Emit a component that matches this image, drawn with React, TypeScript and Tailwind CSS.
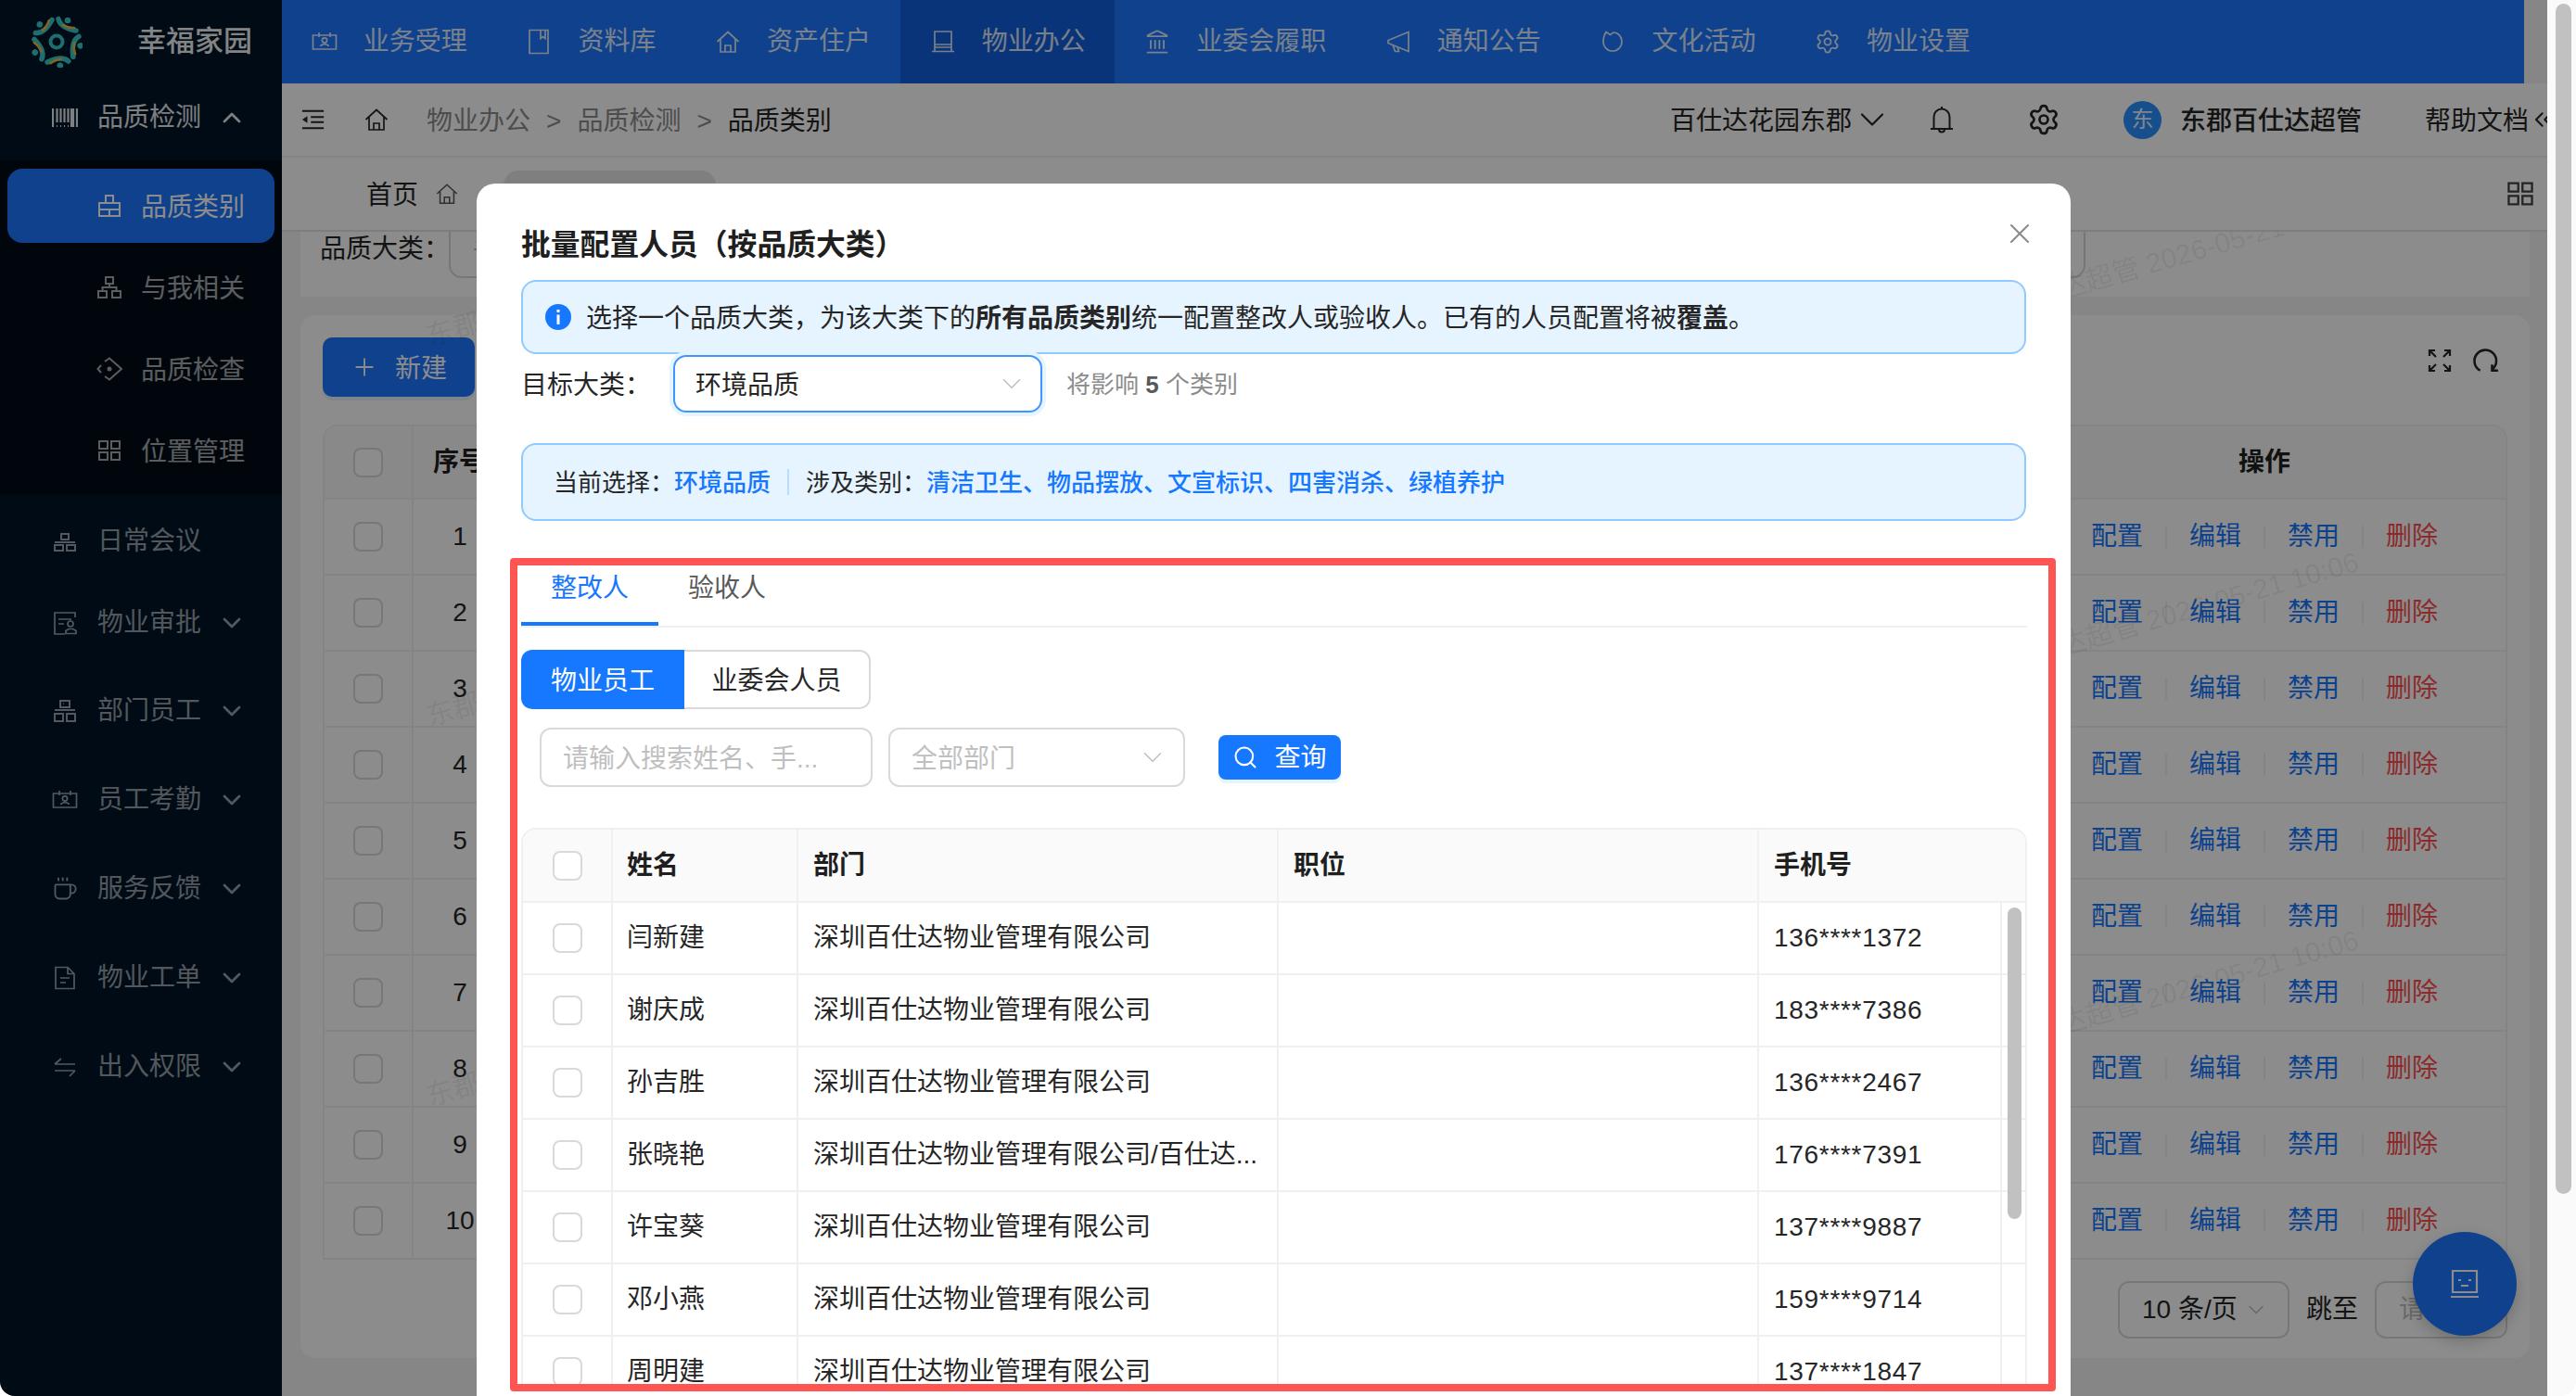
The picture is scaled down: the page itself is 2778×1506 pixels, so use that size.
import { type ReactNode } from "react";
import { ChevronDown, ChevronUp, ChevronsLeft, Coffee, Landmark, Plus, Search, Settings, X } from "lucide-react";

function Ic({ children, className = "h-7 w-7" }: { children: ReactNode; className?: string }) {
  return (
    <svg viewBox="0 0 28 28" fill="none" stroke="currentColor" strokeWidth="1.7" className={`shrink-0 ${className}`}>
      {children}
    </svg>
  );
}

const CalendarPerson = () => (
  <Ic>
    <path d="M1.5 7h25v15h-25z M8 4v5 M20 4v5" />
    <circle cx="14" cy="12.5" r="2.6" />
    <path d="M9.5 19c1-3 8-3 9 0" />
  </Ic>
);
const BookIcon = () => (
  <Ic>
    <path d="M4 1.5h20v25H4z M16 1.5v9l2.5-2 2.5 2v-9" />
  </Ic>
);
const HomeIcon = ({ className }: { className?: string }) => (
  <Ic className={className}>
    <path d="M2.5 14L14 3.5 25.5 14 M6 11.5V25h16V11.5 M11 25v-7h6v7" />
  </Ic>
);
const DeskIcon = () => (
  <Ic>
    <path d="M5 3h18v17H5z M2 24.5h24 M5 20v4.5 M23 20v4.5 M5 17h18" />
  </Ic>
);
const HornIcon = () => (
  <Ic>
    <path d="M25 3.5v21L3 15.5v-3z M8 17.5l2.5 7h4l-1.5-5" />
  </Ic>
);
const CultureIcon = () => (
  <Ic>
    <path d="M7 3.5c-2 3-3 6.5-3 10.5a10 10 0 0 0 20 0c0-5.500-4-10-9-10l-3.500 2.500z" />
    <path d="M11 14v.1 M16 14v.1" />
  </Ic>
);
const BarcodeIcon = () => (
  <Ic>
    <path d="M1 4v20 M5.500 4v15 M9.500 4v15 M13.500 4v15 M17.500 4v15 M21 4v20 M27 4v20 M5 23h1 M9 23h1 M13 23h1 M17 23h1 M23 4v20" strokeWidth="2.2" />
  </Ic>
);
const CategoryIcon = () => (
  <Ic>
    <path d="M10 3h8v8h-8z M3 11h22v14H3z M3 18h22 M14 18v7" strokeWidth="2" />
  </Ic>
);
const TreeIcon = () => (
  <Ic>
    <path d="M10 3h8v7h-8z M2 18h9v7H2z M17 18h9v7h-9z M14 10v4 M6.500 18v-4h15v4" strokeWidth="2" />
  </Ic>
);
const DiamondIcon = () => (
  <Ic>
    <path d="M9 6l5-3.500L27 14 14 25.500 9 22 M5 10l-3.500 4L5 18" strokeWidth="2" />
    <circle cx="14" cy="14" r="2.500" fill="currentColor" stroke="none" />
  </Ic>
);
const GridIcon = ({ className }: { className?: string }) => (
  <Ic className={className}>
    <path d="M3 4h9v8H3z M16 4h9v8h-9z M3 16h9v8H3z M16 16h9v8h-9z" strokeWidth="2" />
  </Ic>
);
const MeetingIcon = () => (
  <Ic>
    <path d="M10 6h8v6h-8z M3 18h9v6H3z M16 18h9v6h-9z M3 15h22" strokeWidth="2" />
  </Ic>
);
const ApproveIcon = () => (
  <Ic>
    <path d="M25 8V3H3v23h11 M7 10h14 M7 15h6" />
    <circle cx="20" cy="15" r="3" />
    <path d="M15 25.500h11v-3l-3-2h-5l-3 2z" />
  </Ic>
);
const StaffIcon = () => (
  <Ic>
    <path d="M9 3h10v7H9z M3 17h9v8H3z M16 17h9v8h-9z M3 13h22" strokeWidth="2" />
    <path d="M12 6h1" />
  </Ic>
);
const OrderIcon = () => (
  <Ic>
    <path d="M4 2.500h13l7 7v16H4z M17 2.500v7h7 M9 14h10 M9 19h6" />
  </Ic>
);
const SwapIcon = () => (
  <Ic>
    <path d="M3 11h22 M3 11l7-6 M25 18H3 M25 18l-6 6" />
  </Ic>
);
const FullscreenIcon = () => (
  <Ic>
    <path d="M3 3l7 7 M3 9V3h6 M25 3l-7 7 M19 3h6v6 M3 25l7-7 M3 19v6h6 M25 25l-7-7 M19 25h6v-6" strokeWidth="2.200" />
  </Ic>
);
const RefreshIcon = () => (
  <Ic className="h-[30px] w-[30px]">
    <path d="M9 24A11 11 0 1 1 21 23 M21 18v6h6" strokeWidth="2.400" />
  </Ic>
);
const CollapseIcon = () => (
  <Ic className="h-[26px] w-[26px]">
    <path d="M1 4h25 M11 11h15 M11 17h15 M1 24h25" strokeWidth="2.200" />
    <path d="M7 10v8l-6-4z" fill="currentColor" stroke="none" />
  </Ic>
);
const BellIcon = () => (
  <svg viewBox="0 0 24 30" fill="none" stroke="currentColor" strokeWidth="2" className="h-[30px] w-6 shrink-0">
    <path d="M0 25h24 M3.500 25V12a8.500 8.500 0 0 1 17 0v13 M12 3.500V1 M9 25.500a3 3 0 0 0 6 0" />
  </svg>
);
const RobotIcon = () => (
  <svg viewBox="0 0 30 32" fill="none" stroke="currentColor" strokeWidth="2.200" className="h-8 w-[30px]">
    <path d="M2 2h26v23H2z M0 30h30 M8 12h3 M19 12h3 M11 18h8" />
  </svg>
);

function Logo() {
  const angles = [0, 72, 144, 216, 288];
  return (
    <svg viewBox="-28 -28 56 56" fill="none" className="h-14 w-14">
      <circle r="6.500" stroke="#38c8cc" strokeWidth="4" />
      {angles.map((a) => (
        <g key={a} transform={`rotate(${a})`}>
          <path d="M2-24.500 Q4-15 21-12" stroke="#38c8cc" strokeWidth="5.500" strokeLinecap="round" />
          <path d="M7-18 Q11-15 19-15" stroke="#f5b53a" strokeWidth="2.500" strokeLinecap="round" />
          <circle cx="12" cy="-23" r="3.300" fill="#38c8cc" />
        </g>
      ))}
    </svg>
  );
}

const navItems: { label: string; icon: ReactNode; active?: boolean }[] = [
  { label: "业务受理", icon: <CalendarPerson /> },
  { label: "资料库", icon: <BookIcon /> },
  { label: "资产住户", icon: <HomeIcon /> },
  { label: "物业办公", icon: <DeskIcon />, active: true },
  { label: "业委会履职", icon: <Landmark className="h-7 w-7 shrink-0" strokeWidth={1.6} /> },
  { label: "通知公告", icon: <HornIcon /> },
  { label: "文化活动", icon: <CultureIcon /> },
  { label: "物业设置", icon: <Settings className="h-7 w-7 shrink-0" strokeWidth={1.6} /> },
];

const subMenu: { label: string; icon: ReactNode; active?: boolean }[] = [
  { label: "品质类别", icon: <CategoryIcon />, active: true },
  { label: "与我相关", icon: <TreeIcon /> },
  { label: "品质检查", icon: <DiamondIcon /> },
  { label: "位置管理", icon: <GridIcon /> },
];

const lowerMenu: { label: string; icon: ReactNode }[] = [
  { label: "部门员工", icon: <StaffIcon /> },
  { label: "员工考勤", icon: <CalendarPerson /> },
  { label: "服务反馈", icon: <Coffee className="h-7 w-7 shrink-0" strokeWidth={1.6} /> },
  { label: "物业工单", icon: <OrderIcon /> },
  { label: "出入权限", icon: <SwapIcon /> },
];

const people = [
  { name: "闫新建", dept: "深圳百仕达物业管理有限公司", phone: "136****1372" },
  { name: "谢庆成", dept: "深圳百仕达物业管理有限公司", phone: "183****7386" },
  { name: "孙吉胜", dept: "深圳百仕达物业管理有限公司", phone: "136****2467" },
  { name: "张晓艳", dept: "深圳百仕达物业管理有限公司/百仕达...", phone: "176****7391" },
  { name: "许宝葵", dept: "深圳百仕达物业管理有限公司", phone: "137****9887" },
  { name: "邓小燕", dept: "深圳百仕达物业管理有限公司", phone: "159****9714" },
  { name: "周明建", dept: "深圳百仕达物业管理有限公司", phone: "137****1847" },
];

const rowNumbers = [1, 2, 3, 4, 5, 6, 7, 8, 9, 10];

function Checkbox() {
  return <span className="block h-[32px] w-[32px] rounded-[8px] border-2 border-[#d9d9d9] bg-white" />;
}

function SideRow({ label, icon, open }: { label: string; icon: ReactNode; open?: boolean }) {
  return (
    <div className={`flex h-full items-center pl-[56px] ${open ? "text-white/90" : "text-white/60"}`}>
      {icon}
      <span className="ml-[21px] w-[112px] text-[28px]">{label}</span>
      <span className="ml-[17px]">
        {open ? <ChevronUp className="h-8 w-8" strokeWidth={2} /> : <ChevronDown className="h-8 w-8" strokeWidth={2} />}
      </span>
    </div>
  );
}

function Sidebar() {
  return (
    <aside className="flex h-full w-[304px] shrink-0 flex-col bg-[#001529]">
      <div className="flex h-[90px] shrink-0 items-center pl-[33px]">
        <Logo />
        <span className="ml-[59px] text-[31px] font-medium text-white/95">幸福家园</span>
      </div>
      <div className="h-[74px] shrink-0">
        <SideRow label="品质检测" icon={<BarcodeIcon />} open />
      </div>
      <div className="mt-[9px] flex h-[360px] shrink-0 flex-col gap-[8px] bg-[#000c17] pt-[9px]">
        {subMenu.map((item) => (
          <div
            key={item.label}
            className={`mx-[8px] flex h-[80px] items-center rounded-[16px] pl-[96px] ${
              item.active ? "bg-[#1c77ff] text-white" : "text-white/65"
            }`}
          >
            {item.icon}
            <span className="ml-[20px] pt-[3px] text-[28px]">{item.label}</span>
          </div>
        ))}
      </div>
      <div className="mt-[7px] flex h-[88px] shrink-0 items-center pl-[56px] text-white/60">
        <MeetingIcon />
        <span className="ml-[21px] text-[28px]">日常会议</span>
      </div>
      <div className="h-[88px] shrink-0">
        <SideRow label="物业审批" icon={<ApproveIcon />} />
      </div>
      <div className="mt-[3px] flex flex-col">
        {lowerMenu.map((item) => (
          <div key={item.label} className="h-[96px]">
            <SideRow label={item.label} icon={item.icon} />
          </div>
        ))}
      </div>
    </aside>
  );
}

function TopNav() {
  return (
    <div className="flex h-[90px] w-[2418px] shrink-0 bg-[#1c77ff] text-white/85">
      {navItems.map((item) => (
        <div
          key={item.label}
          className={`flex items-center gap-[28px] px-[31.8px] text-[28px] ${item.active ? "bg-[#1260dc]" : ""}`}
        >
          {item.icon}
          <span>{item.label}</span>
        </div>
      ))}
    </div>
  );
}

function BreadcrumbBar() {
  return (
    <div className="flex h-[80px] shrink-0 items-center border-b-2 border-[#efefef] bg-white pl-[21px] text-[28px] text-[#262626]">
      <CollapseIcon />
      <span className="ml-[41px]">
        <HomeIcon className="h-7 w-7" />
      </span>
      <span className="ml-[40px] pt-[3px] text-[#8c8c8c]">物业办公</span>
      <span className="ml-[17px] pt-[3px] text-[#8c8c8c]">&gt;</span>
      <span className="ml-[17px] pt-[3px] text-[#8c8c8c]">品质检测</span>
      <span className="ml-[17px] pt-[3px] text-[#8c8c8c]">&gt;</span>
      <span className="ml-[17px] pt-[3px]">品质类别</span>
      <div className="ml-auto flex items-center">
        <span className="pt-[3px]">百仕达花园东郡</span>
        <ChevronDown className="h-[44px] w-[44px]" strokeWidth={1.2} />
        <span className="ml-[41px]">
          <BellIcon />
        </span>
        <Settings className="ml-[80px] h-[36px] w-[36px]" strokeWidth={1.8} />
        <span className="ml-[68px] flex h-[41px] w-[41px] items-center justify-center rounded-full bg-[#2b8fff] text-[24px] text-white/90">
          东
        </span>
        <span className="ml-[20px] pt-[3px] font-medium">东郡百仕达超管</span>
        <span className="ml-[68px] pt-[3px]">帮助文档</span>
        <span className="flex w-[20px] overflow-hidden">
          <ChevronsLeft className="h-8 w-8 shrink-0" strokeWidth={1.6} />
        </span>
      </div>
    </div>
  );
}

function TabStrip() {
  return (
    <div className="flex h-[80px] shrink-0 items-center border-b-2 border-[#e4e4e4] bg-white pl-[91px] pr-[13px] text-[28px] text-[#262626]">
      <span className="pt-[3px]">首页</span>
      <span className="ml-[18px] text-[#595959]">
        <HomeIcon className="h-[26px] w-[26px]" />
      </span>
      <div className="ml-[48px] mt-[16px] h-[64px] w-[229px] self-end rounded-t-[16px] bg-[#e8e8e8]" />
      <span className="ml-auto text-[#434343]">
        <GridIcon className="h-[32px] w-[32px]" />
      </span>
    </div>
  );
}

function BackgroundTable() {
  return (
    <div className="mt-[30px] w-[2356px] overflow-hidden rounded-t-[16px] border-x-2 border-t-2 border-[#f0f0f0]">
      <div className="flex h-[79px] items-center border-b-2 border-[#f0f0f0] bg-[#fafafa] text-[28px] font-semibold text-[#1f1f1f]">
        <div className="flex h-full w-[96px] shrink-0 items-center justify-center border-r-2 border-[#f0f0f0]">
          <Checkbox />
        </div>
        <span className="ml-[21px]">序号</span>
        <span className="ml-auto w-[520px] text-center">操作</span>
      </div>
      {rowNumbers.map((n) => (
        <div key={n} className="flex h-[82px] items-center border-b-2 border-[#f0f0f0] text-[28px] text-[#262626]">
          <div className="flex h-full w-[96px] shrink-0 items-center justify-center border-r-2 border-[#f0f0f0]">
            <Checkbox />
          </div>
          <span className="w-[100px] text-center">{n}</span>
          <div className="ml-auto flex w-[520px] items-center justify-center text-[#1677ff]">
            <span>配置</span>
            <span className="mx-[24px] h-[24px] w-[2px] bg-[#f0f0f0]" />
            <span>编辑</span>
            <span className="mx-[24px] h-[24px] w-[2px] bg-[#f0f0f0]" />
            <span>禁用</span>
            <span className="mx-[24px] h-[24px] w-[2px] bg-[#f0f0f0]" />
            <span className="text-[#ff4d4f]">删除</span>
          </div>
        </div>
      ))}
    </div>
  );
}

function PageContent() {
  return (
    <div className="flex min-h-0 flex-1 flex-col pl-[20px] pr-[19px]">
      <div className="flex h-[70px] shrink-0 items-start overflow-hidden bg-white pl-[21px] text-[28px] text-[#262626]">
        <span className="h-[38px] leading-[38px]">品质大类：</span>
        <div className="ml-[-1px] flex h-[50px] w-[1765px] items-center rounded-b-[14px] border-x-2 border-b-2 border-[#d9d9d9] pl-[24px] text-[#bfbfbf]">
          请选择
        </div>
      </div>
      <div className="mt-[20px] h-[1125px] shrink-0 rounded-[16px] bg-white pl-[24px] pt-[24px]">
        <div className="flex items-start justify-between pr-[33px]">
          <div className="flex h-[64px] w-[164px] items-center justify-center gap-[18px] rounded-[10px] bg-[#1c77ff] text-[28px] text-white shadow-[0_4px_0_#e6f4ff]">
            <Plus className="h-[30px] w-[30px]" strokeWidth={1.5} />
            <span className="pt-[3px]">新建</span>
          </div>
          <div className="mt-[10px] flex items-center gap-[20px] text-[#262626]">
            <FullscreenIcon />
            <RefreshIcon />
          </div>
        </div>
        <BackgroundTable />
        <div className="mt-[23px] flex items-center justify-end pr-[24px] text-[28px] text-[#262626]">
          <div className="flex h-[62px] w-[185px] items-center justify-between rounded-[12px] border-2 border-[#d9d9d9] pl-[24px] pr-[20px]">
            <span>10 条/页</span>
            <ChevronDown className="h-7 w-7 text-[#bfbfbf]" strokeWidth={1.3} />
          </div>
          <span className="ml-[18px]">跳至</span>
          <div className="ml-[18px] flex h-[62px] w-[143px] items-center rounded-[12px] border-2 border-[#d9d9d9] pl-[24px] text-[#bfbfbf]">
            请输入
          </div>
        </div>
      </div>
    </div>
  );
}

function Watermarks() {
  const wm =
    "pointer-events-none absolute origin-left -rotate-[16deg] whitespace-nowrap text-[30px] text-black/[0.07]";
  const text = "东郡百仕达超管 2026-05-21 10:06";
  return (
    <div className="pointer-events-none absolute bottom-0 left-0 right-0 top-[250px] overflow-hidden">
      <span className={`${wm} left-[460px] top-[91px]`}>{text}</span>
      <span className={`${wm} left-[460px] top-[501px]`}>{text}</span>
      <span className={`${wm} left-[460px] top-[911px]`}>{text}</span>
      <span className={`${wm} left-[2105px] top-[73px]`}>{text}</span>
      <span className={`${wm} left-[2105px] top-[458px]`}>{text}</span>
      <span className={`${wm} left-[2105px] top-[866px]`}>{text}</span>
    </div>
  );
}

function InfoAlert({ className, children }: { className: string; children: ReactNode }) {
  return (
    <div className={`flex items-center rounded-[16px] border-2 border-[#91caff] bg-[#e6f4ff] ${className}`}>
      {children}
    </div>
  );
}

function PeopleTable() {
  const rowGrid = "grid grid-cols-[95px_200px_518px_518px_262px_1fr]";
  return (
    <div className="relative mt-[44px] h-[603px] w-[1624px] overflow-hidden rounded-t-[16px] border-x-2 border-t-2 border-[#f0f0f0]">
      <div className="grid h-[79px] grid-cols-[95px_200px_518px_518px_1fr] border-b-2 border-[#f0f0f0] bg-[#fafafa] text-[28px] font-semibold text-[#1f1f1f]">
        <div className="flex items-center justify-center">
          <Checkbox />
        </div>
        <div className="flex items-center border-l-2 border-[#f0f0f0] pl-[15px]">姓名</div>
        <div className="flex items-center border-l-2 border-[#f0f0f0] pl-[16px]">部门</div>
        <div className="flex items-center border-l-2 border-[#f0f0f0] pl-[16px]">职位</div>
        <div className="flex items-center border-l-2 border-[#f0f0f0] pl-[16px]">手机号</div>
      </div>
      {people.map((p) => (
        <div key={p.name} className={`${rowGrid} h-[78px] border-b-2 border-[#f0f0f0] text-[28px] text-[#262626]`}>
          <div className="flex items-center justify-center">
            <Checkbox />
          </div>
          <div className="flex items-center border-l-2 border-[#f0f0f0] pl-[15px]">{p.name}</div>
          <div className="flex items-center whitespace-nowrap border-l-2 border-[#f0f0f0] pl-[16px]">{p.dept}</div>
          <div className="border-l-2 border-[#f0f0f0]" />
          <div className="flex items-center border-l-2 border-[#f0f0f0] pl-[16px] tracking-[0.7px]">{p.phone}</div>
          <div className="border-l-2 border-[#f0f0f0]" />
        </div>
      ))}
      <div className="absolute left-[1601px] top-[84px] h-[336px] w-[15px] rounded-full bg-[#c1c1c1]" />
    </div>
  );
}

function ConfigModal() {
  return (
    <div className="absolute left-[514px] top-[198px] h-[1308px] w-[1719px] overflow-hidden rounded-t-[20px] bg-white pl-[48px] text-[28px] text-[#262626]">
      <div className="flex h-[104px] items-start justify-between pr-[37px] pt-[48px]">
        <h2 className="text-[31.8px] font-semibold leading-[36px] text-[#1f1f1f]">批量配置人员（按品质大类）</h2>
        <X className="mt-[-12px] h-[36px] w-[36px] text-[#8c8c8c]" strokeWidth={1.4} />
      </div>
      <InfoAlert className="h-[80px] w-[1623px] pl-[24px]">
        <svg viewBox="0 0 28 28" className="h-7 w-7 shrink-0">
          <circle cx="14" cy="14" r="14" fill="#1677ff" />
          <path d="M12.500 11.500h3V22h-3z M12.500 6h3v3h-3z" fill="#fff" />
        </svg>
        <span className="ml-[16px] whitespace-nowrap pt-[3px]">
          选择一个品质大类，为该大类下的<strong className="font-semibold">所有品质类别</strong>
          统一配置整改人或验收人。已有的人员配置将被<strong className="font-semibold">覆盖</strong>。
        </span>
      </InfoAlert>
      <div className="flex h-[64px] items-center">
        <span className="pt-[3px]">目标大类：</span>
        <div className="ml-[24px] flex h-[62px] w-[398px] items-center justify-between rounded-[14px] border-2 border-[#4096ff] pl-[22px] pr-[14px] shadow-[0_0_0_4px_#e6f4ff]">
          <span className="pt-[3px]">环境品质</span>
          <ChevronDown className="h-[34px] w-[34px] text-[#bfbfbf]" strokeWidth={1.1} />
        </div>
        <span className="ml-[26px] pt-[3px] text-[26px] text-[#8c8c8c]">
          将影响 <b className="font-semibold text-[#595959]">5</b> 个类别
        </span>
      </div>
      <InfoAlert className="mt-[32px] h-[84px] w-[1623px] pl-[33px] text-[26px]">
        <span className="pt-[3px]">当前选择：</span>
        <span className="pt-[3px] font-medium text-[#1677ff]">环境品质</span>
        <span className="mx-[18px] h-[28px] w-[2px] bg-[#bcdcfb]" />
        <span className="pt-[3px]">涉及类别：</span>
        <span className="pt-[3px] font-medium text-[#1677ff]">清洁卫生、物品摆放、文宣标识、四害消杀、绿植养护</span>
      </InfoAlert>

      <div className="mt-[40px] flex h-[75px] w-[1624px] border-b-2 border-[#f0f0f0]">
        <div className="flex w-[148px] flex-col">
          <div className="flex h-[62px] items-center justify-center pt-[3px] text-[#1677ff]">整改人</div>
          <div className="mt-[7px] h-[4px] bg-[#1677ff]" />
        </div>
        <div className="flex h-[62px] w-[148px] items-center justify-center pt-[3px] text-[#595959]">验收人</div>
      </div>

      <div className="mt-[24px] flex h-[64px] w-[377px]">
        <div className="flex w-[176px] items-center justify-center rounded-l-[12px] bg-[#1677ff] pt-[3px] text-white">
          物业员工
        </div>
        <div className="flex flex-1 items-center justify-center rounded-r-[12px] border-y-2 border-r-2 border-[#d9d9d9] pt-[3px]">
          业委会人员
        </div>
      </div>

      <div className="mt-[20px] flex h-[64px] items-center pl-[20px]">
        <div className="flex h-full w-[359px] items-center rounded-[12px] border-2 border-[#d9d9d9] pl-[23px] pt-[3px] text-[#bfbfbf]">
          请输入搜索姓名、手...
        </div>
        <div className="ml-[17px] flex h-full w-[320px] items-center justify-between rounded-[12px] border-2 border-[#d9d9d9] pl-[23px] pr-[16px] text-[#bfbfbf]">
          <span className="pt-[3px]">全部部门</span>
          <ChevronDown className="h-[34px] w-[34px]" strokeWidth={1.1} />
        </div>
        <div className="ml-[36px] flex h-[48px] w-[132px] items-center justify-center gap-[17px] rounded-[8px] bg-[#1677ff] text-white shadow-[0_4px_0_#e6f4ff]">
          <Search className="h-[28px] w-[28px]" strokeWidth={1.8} />
          <span className="pt-[1px]">查询</span>
        </div>
      </div>

      <PeopleTable />
    </div>
  );
}

export default function App() {
  return (
    <div className="relative flex h-[1506px] w-[2778px] overflow-hidden rounded-b-[16px] bg-[#fafafa] [font-family:'Liberation_Sans','Noto_Sans_CJK_SC',sans-serif]">
      <div className="relative flex h-full w-[2747px] shrink-0 bg-[#f5f5f5]">
        <Sidebar />
        <main className="flex min-w-0 flex-1 flex-col">
          <TopNav />
          <BreadcrumbBar />
          <TabStrip />
          <PageContent />
        </main>
        <Watermarks />
        <div className="absolute left-[2602px] top-[1329px] flex h-[112px] w-[112px] items-center justify-center rounded-full bg-[#1c77ff] text-white shadow-[0_6px_16px_rgba(0,0,0,0.2)]">
          <RobotIcon />
        </div>
        <div className="absolute inset-0 bg-black/45" />
      </div>
      <div className="w-[31px] shrink-0 pl-[9px] pt-[4px]">
        <div className="h-[1284px] w-[17px] rounded-full bg-[#c1c1c1]" />
      </div>
      <ConfigModal />
      <div className="pointer-events-none absolute left-[550px] top-[602px] h-[899px] w-[1667px] rounded-[4px] border-[8px] border-[#ff5552]" />
    </div>
  );
}
